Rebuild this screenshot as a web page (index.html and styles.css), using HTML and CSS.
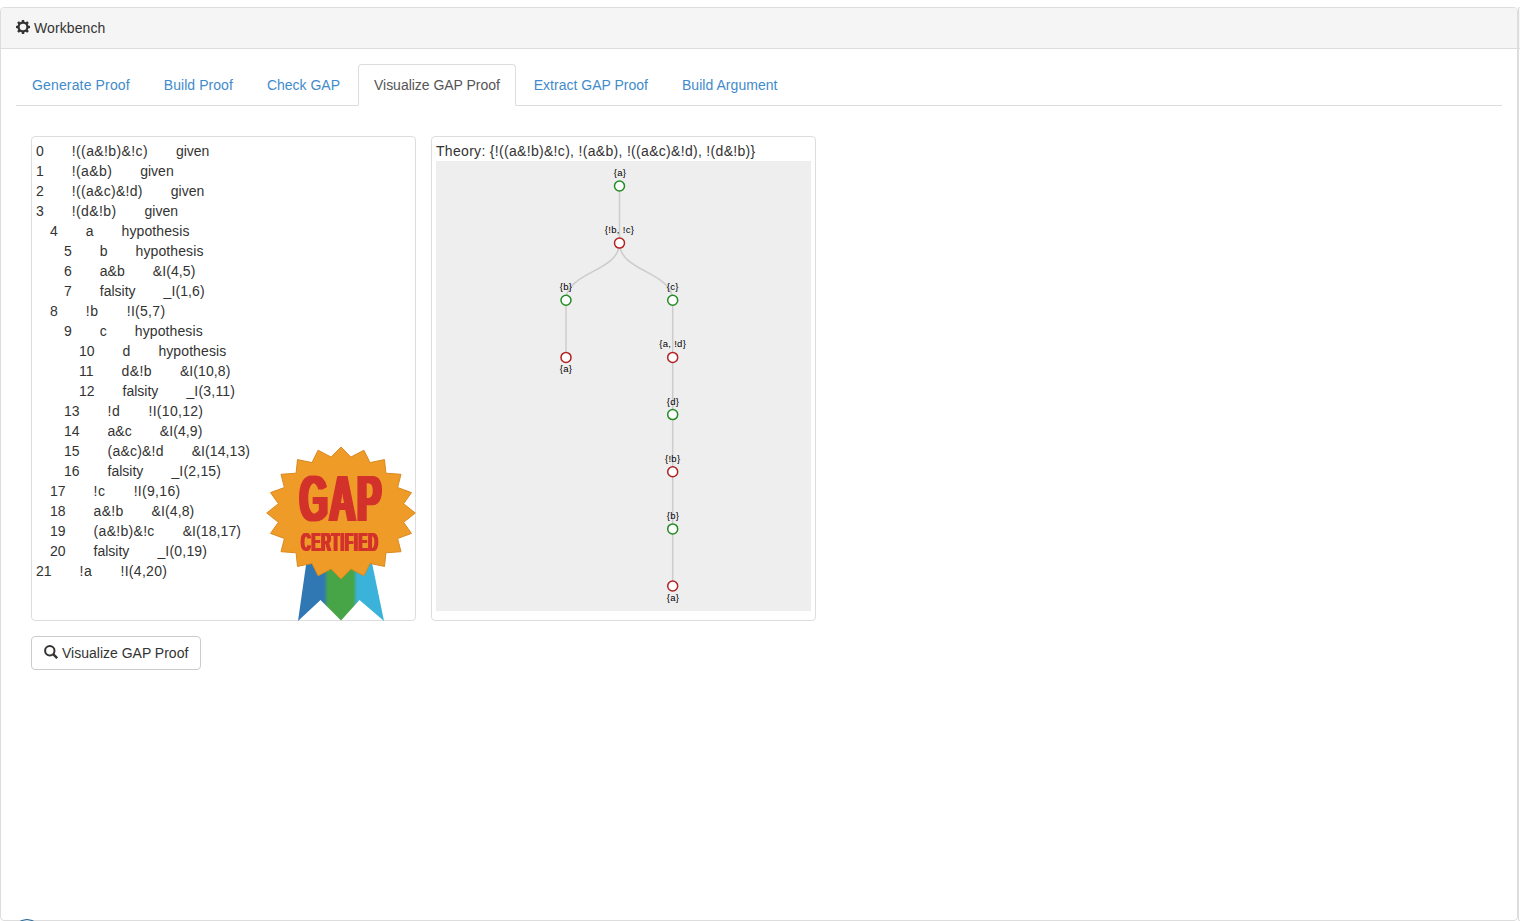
FILE: index.html
```html
<!DOCTYPE html>
<html lang="en">
<head>
<meta charset="utf-8">
<title>Workbench</title>
<link rel="stylesheet" href="styles.css">
</head>
<body>
<div class="deck">
<section class="panel">
  <header class="panel-heading">
    <svg class="icon" width="14" height="14" viewBox="0 0 14 14"><path fill="#333" fill-rule="evenodd" d="M5.900 0h2.200l.3 1.700 1.300.5L11.200 1.200l1.600 1.600-1 1.500.5 1.300L14 5.900v2.200l-1.700.3-.5 1.300 1 1.500-1.600 1.600-1.500-1-1.300.5L8.100 14H5.900l-.3-1.700-1.300-.5-1.500 1-1.600-1.600 1-1.500-.5-1.300L0 8.100V5.900l1.700-.3.500-1.300-1-1.500L2.800 1.200l1.500 1 1.300-.5zM7 3.700a3.300 3.300 0 1 0 0 6.600 3.300 3.300 0 0 0 0-6.600z"/></svg>
    <span class="s1">Workbench</span>
  </header>
  <div class="panel-body">
    <nav class="tabs">
      <a class="tab s2">Generate Proof</a>
      <a class="tab s1">Build Proof</a>
      <a class="tab">Check GAP</a>
      <a class="tab active">Visualize GAP Proof</a>
      <a class="tab">Extract GAP Proof</a>
      <a class="tab s1">Build Argument</a>
    </nav>
    <div class="content">
      <div class="boxes">
        <div class="box proof">
          <div class="line"><span>0</span><span class="s4">!((a&amp;!b)&amp;!c)</span><span>given</span></div>
          <div class="line"><span>1</span><span class="s4">!(a&amp;b)</span><span>given</span></div>
          <div class="line"><span>2</span><span class="s3">!((a&amp;c)&amp;!d)</span><span>given</span></div>
          <div class="line"><span>3</span><span class="s4">!(d&amp;!b)</span><span>given</span></div>
          <div class="line in1"><span>4</span><span>a</span><span class="s1">hypothesis</span></div>
          <div class="line in2"><span>5</span><span>b</span><span class="s1">hypothesis</span></div>
          <div class="line in2"><span>6</span><span>a&amp;b</span><span class="s1">&amp;I(4,5)</span></div>
          <div class="line in2"><span>7</span><span>falsity</span><span class="s1">_I(1,6)</span></div>
          <div class="line in1"><span>8</span><span class="s6">!b</span><span class="s3">!I(5,7)</span></div>
          <div class="line in2"><span>9</span><span>c</span><span class="s1">hypothesis</span></div>
          <div class="line in3"><span>10</span><span>d</span><span class="s1">hypothesis</span></div>
          <div class="line in3"><span>11</span><span class="s4">d&amp;!b</span><span class="s1">&amp;I(10,8)</span></div>
          <div class="line in3"><span>12</span><span>falsity</span><span class="s2">_I(3,11)</span></div>
          <div class="line in2"><span>13</span><span class="s6">!d</span><span class="s3">!I(10,12)</span></div>
          <div class="line in2"><span>14</span><span>a&amp;c</span><span class="s1">&amp;I(4,9)</span></div>
          <div class="line in2"><span>15</span><span class="s2">(a&amp;c)&amp;!d</span><span class="s1">&amp;I(14,13)</span></div>
          <div class="line in2"><span>16</span><span>falsity</span><span class="s2">_I(2,15)</span></div>
          <div class="line in1"><span>17</span><span class="s6">!c</span><span class="s3">!I(9,16)</span></div>
          <div class="line in1"><span>18</span><span class="s3">a&amp;!b</span><span class="s1">&amp;I(4,8)</span></div>
          <div class="line in1"><span>19</span><span class="s3">(a&amp;!b)&amp;!c</span><span class="s1">&amp;I(18,17)</span></div>
          <div class="line in1"><span>20</span><span>falsity</span><span class="s2">_I(0,19)</span></div>
          <div class="line"><span>21</span><span class="s6">!a</span><span class="s3">!I(4,20)</span></div>
          <svg class="badge" width="150" height="175" viewBox="0 0 150 175">
            <defs>
              <linearGradient id="ribbon" gradientUnits="userSpaceOnUse" x1="32" y1="0" x2="118" y2="0">
                <stop offset="0" stop-color="#3078b4"/><stop offset=".3" stop-color="#3078b4"/><stop offset=".35" stop-color="#48a547"/>
                <stop offset=".64" stop-color="#48a547"/><stop offset=".69" stop-color="#3ab2d9"/><stop offset="1" stop-color="#3ab2d9"/>
              </linearGradient>
              <filter id="heavy"><feMorphology operator="dilate" radius="2 0"/></filter>
              <filter id="heavy-small"><feMorphology operator="dilate" radius="1 0"/></filter>
            </defs>
            <path fill="url(#ribbon)" d="M41 112H105L118 175 93.500 154 75 174.500 54.500 154 32 175z"/>
            <path fill="#ef9b28" stroke="#d98a22" stroke-width="1" d="M75 1L84.900 11.100 97.900 4.200 104 16.600 118.500 13.600 119.900 27.200 135 28.300 131.600 41.500 145.500 46.600 137.600 57.700 149.300 67 137.600 76.300 145.500 87.400 131.600 92.500 135 105.700 119.900 106.800 118.500 120.400 104 117.400 97.900 129.800 84.900 122.900 75 133 65.100 122.900 52.100 129.800 46 117.400 31.500 120.400 30.100 106.800 15 105.700 18.400 92.500 4.500 87.400 12.400 76.300.700 67 12.400 57.700 4.500 46.600 18.400 41.500 15 28.300 30.100 27.200 31.500 13.600 46 16.600 52.100 4.200 65.100 11.100z"/>
            <g filter="url(#heavy)"><text class="gap" transform="translate(33.500 74.500) scale(.57 1)">GAP</text></g>
            <g filter="url(#heavy-small)"><text class="certified" transform="translate(35 104.500) scale(.535 1)">CERTIFIED</text></g>
          </svg>
        </div>
        <div class="box theory">
          <div class="title">Theory: {!((a&amp;!b)&amp;!c), !(a&amp;b), !((a&amp;c)&amp;!d), !(d&amp;!b)}</div>
          <svg class="tree" width="375" height="450" viewBox="0 0 375 450">
            <g class="links">
              <path d="M183.500 25V82.100"/>
              <path d="M183.500 82.100C183.500 110.700 130 110.700 130 139.300"/>
              <path d="M183.500 82.100C183.500 110.700 236.700 110.700 236.700 139.300"/>
              <path d="M130 139.300V196.400"/>
              <path d="M236.700 139.300V425"/>
            </g>
            <g class="pro">
              <circle cx="183.500" cy="25" r="5"/><circle cx="130" cy="139.300" r="5"/><circle cx="236.700" cy="139.300" r="5"/>
              <circle cx="236.700" cy="253.600" r="5"/><circle cx="236.700" cy="367.900" r="5"/>
            </g>
            <g class="con">
              <circle cx="183.500" cy="82.100" r="5"/><circle cx="130" cy="196.400" r="5"/><circle cx="236.700" cy="196.400" r="5"/>
              <circle cx="236.700" cy="310.700" r="5"/><circle cx="236.700" cy="425" r="5"/>
            </g>
            <g class="labels">
              <text x="184" y="15">{a}</text><text x="183.500" y="72">{!b, !c}</text>
              <text x="130" y="129">{b}</text><text x="236.700" y="129">{c}</text>
              <text x="130" y="211">{a}</text><text x="236.700" y="186">{a, !d}</text>
              <text x="237" y="244">{d}</text><text x="236.700" y="301">{!b}</text>
              <text x="237" y="358">{b}</text><text x="237" y="440">{a}</text>
            </g>
          </svg>
        </div>
      </div>
      <button class="btn"><svg class="icon" width="14" height="14" viewBox="0 0 14 14"><circle cx="5.800" cy="5.700" r="4.700" fill="none" stroke="#333" stroke-width="2"/><path d="M9.200 9.200L13.200 13.200" stroke="#333" stroke-width="2.400"/></svg><span>Visualize GAP Proof</span></button>
    </div>
  </div>
</section>
<section class="panel next"><header class="panel-heading"></header></section>
</div>
<div class="knob"></div>
</body>
</html>
```
FILE: styles.css
```css
* { box-sizing: border-box; }
body { margin: 0; height: 921px; overflow: hidden; position: relative; background: #fff; color: #333; font: 14px/20px "Liberation Sans", Arial, sans-serif; }
.deck { display: flex; padding-top: 7px; width: 100%; overflow: hidden; }
.panel { flex: none; width: 1518px; height: 914px; border: 1px solid #ddd; border-radius: 4px; background: #fff; }
.panel.next { width: 2px; border-right: 0; border-radius: 4px 0 0 4px; }
.panel.next .panel-heading { padding: 0; border-radius: 0; }
.panel-heading { height: 41px; padding: 10px 15px; background: #f5f5f5; border-bottom: 1px solid #ddd; border-radius: 3px 3px 0 0; display: flex; gap: 4px; }
.panel-heading .icon { margin-top: 2px; }
.panel-body { padding: 15px; }
.tabs { display: flex; border-bottom: 1px solid #ddd; height: 42px; }
.tab { height: 42px; padding: 10px 15px; margin-right: 2px; border: 1px solid transparent; border-radius: 4px 4px 0 0; color: #428bca; white-space: nowrap; }
.tab.active { color: #555; background: #fff; border-color: #ddd #ddd #fff; letter-spacing: -.03px; }
.s1 { letter-spacing: .1px; }
.tab.s1 { letter-spacing: .05px; }
.s2 { letter-spacing: .2px; }
.tab.s2 { letter-spacing: .15px; }
.s3 { letter-spacing: .3px; }
.s4 { letter-spacing: .38px; }
.s6 { letter-spacing: .6px; }
.content { padding: 30px 15px; }
.boxes { display: flex; gap: 15px; }
.box { position: relative; width: 385px; height: 485px; padding: 4px; border: 1px solid #ddd; border-radius: 4px; background: #fff; }
.line { display: flex; gap: 28px; height: 20px; white-space: nowrap; }
.in1 { padding-left: 14px; }
.in2 { padding-left: 28px; }
.in3 { padding-left: 43px; }
.badge { position: absolute; right: -1px; bottom: -1px; }
.gap, .certified { font-family: "Liberation Sans", Arial, sans-serif; font-weight: 700; fill: #d2302c; }
.gap { font-size: 64px; letter-spacing: 2.5px; }
.certified { font-size: 25px; line-height: 1; letter-spacing: 1.5px; }
.title { height: 20px; white-space: nowrap; letter-spacing: .31px; }
.tree { display: block; background: #eee; }
.links path { fill: none; stroke: #ccc; stroke-width: 1.5px; }
.pro circle, .con circle { fill: #fff; stroke-width: 1.5px; }
.pro circle { stroke: #228b22; }
.con circle { stroke: #b22222; }
.labels text { font: 9.5px "Liberation Sans", Arial, sans-serif; letter-spacing: .3px; text-anchor: middle; fill: #000; }
.btn { display: flex; gap: 4px; margin: 15px 0 0; height: 34px; width: 170px; padding: 6px 12px; border: 1px solid #ccc; border-radius: 4px; background: #fff; color: #333; font: inherit; white-space: nowrap; }
.btn .icon { margin-top: 2px; flex: none; }
.knob { position: absolute; left: 12px; top: 919px; width: 30px; height: 30px; border: 1.5px solid #1f5f8f; border-radius: 50%; background: #d8e8f4; }
```
